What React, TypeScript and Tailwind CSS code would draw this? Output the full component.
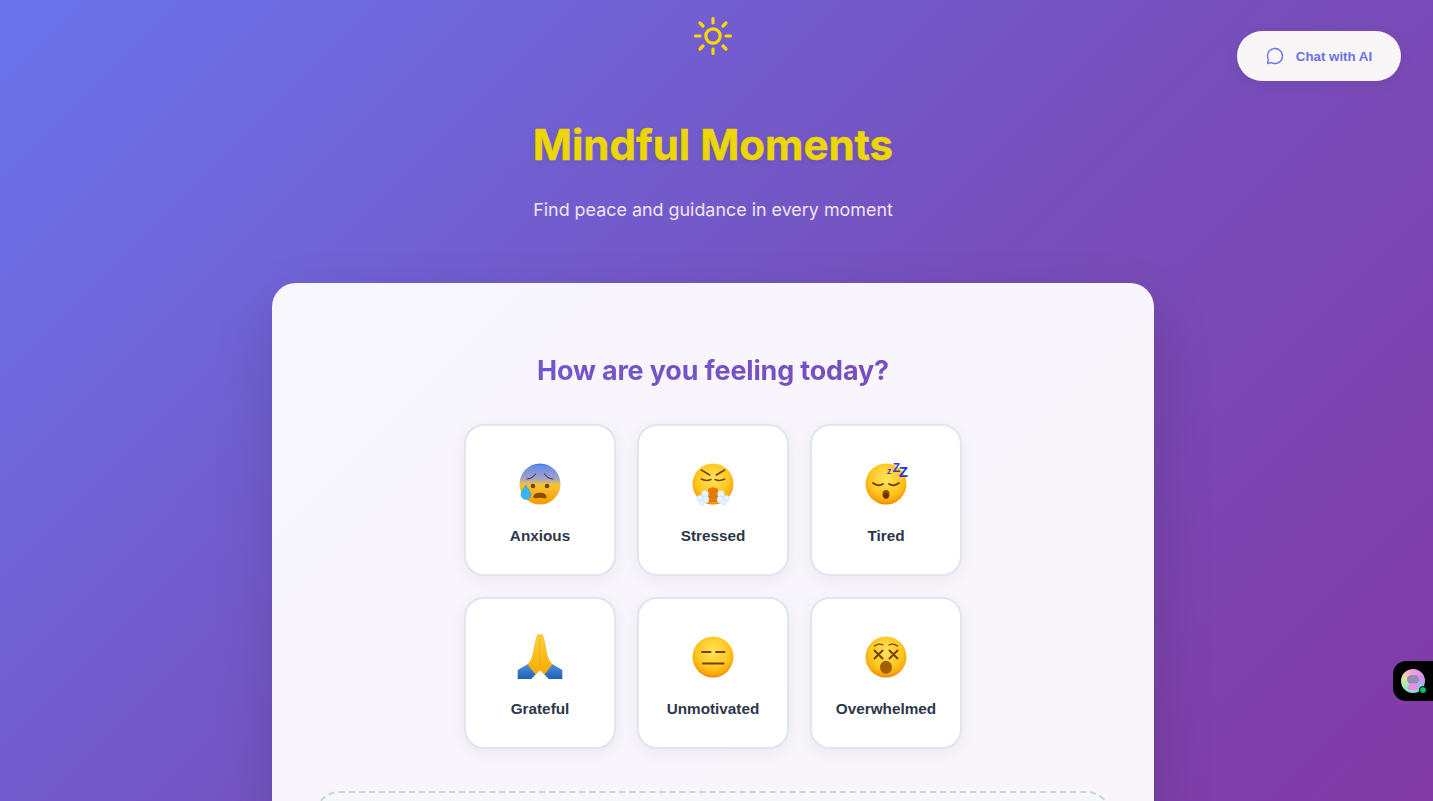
import React from "react";
import { MessageCircle } from "lucide-react";

function Face({ id, children, top }: { id: string; children?: React.ReactNode; top?: boolean }) {
  return (
    <svg width="48" height="48" viewBox="0 0 48 48" className="block overflow-visible">
      <defs>
        {top ? (
          <linearGradient id={id} x1="0" y1="0" x2="0" y2="1">
            <stop offset="0" stopColor="#2a7ff2" />
            <stop offset="0.07" stopColor="#6a8ce8" />
            <stop offset="0.38" stopColor="#a5a3c4" />
            <stop offset="0.52" stopColor="#f7c531" />
            <stop offset="1" stopColor="#f79a00" />
          </linearGradient>
        ) : (
          <radialGradient id={id} cx="0.5" cy="0.38" r="0.62">
            <stop offset="0" stopColor="#ffe45c" />
            <stop offset="0.62" stopColor="#ffc822" />
            <stop offset="0.9" stopColor="#fba508" />
            <stop offset="1" stopColor="#ef7d00" />
          </radialGradient>
        )}
      </defs>
      <circle cx="24" cy="24" r="20.5" fill={`url(#${id})`} />
      {children}
    </svg>
  );
}

const B = "#7a3f00";
const Z = "Liberation Sans, sans-serif";

const emojis: Record<string, React.ReactNode> = {
  Anxious: (
    <Face id="f1" top>
      <path d="M11 19q5.500-.5 8.500-5M37 19q-5.500-.5-8.500-5" stroke="#3e3a60" strokeWidth="1.100" fill="none" strokeLinecap="round" />
      <circle cx="17" cy="26" r="2.300" fill={B} />
      <circle cx="31" cy="26" r="2.300" fill={B} />
      <path d="M17.500 37c0-3 3-4.200 6.500-4.200s6.500 1.200 6.500 4.200c0 1.200-1 1.500-2 1.200-3-.7-6-.7-9 0-1 .3-2 0-2-1.200z" fill="#8a4a08" />
      <path d="M9.700 25c-2 3.800-4.700 6.500-4.700 9.500a4.900 4.900 0 0 0 9.800 0c0-3-3-5.700-5.100-9.500z" fill="#38b6f5" stroke="#1b8ee0" strokeWidth=".5" />
    </Face>
  ),
  Stressed: (
    <Face id="f2">
      <path d="M12.300 10l8.400 5M35.700 10l-8.400 5" stroke={B} strokeWidth="1.500" strokeLinecap="round" />
      <path d="M12.300 19q4.500 2.500 9.700.5M35.700 19q-4.500 2.500-9.700.5" stroke={B} strokeWidth="1.500" fill="none" strokeLinecap="round" />
      <path d="M19 42V29q5-3.500 10 0v13z" fill="#e47a00" />
      <g fill="#e8f3fb" stroke="#c5dbea" strokeWidth=".5">
        <circle cx="16" cy="34" r="3.500" />
        <circle cx="11" cy="38.500" r="3.300" />
        <circle cx="16.500" cy="39.500" r="3.500" />
        <circle cx="13" cy="42.500" r="2.400" />
        <circle cx="32" cy="34" r="3.500" />
        <circle cx="37" cy="38.500" r="3.300" />
        <circle cx="31.500" cy="39.500" r="3.500" />
        <circle cx="35" cy="42.500" r="2.400" />
      </g>
    </Face>
  ),
  Tired: (
    <Face id="f3">
      <path d="M11 23q5 4 10 1M37 23q-5 4-10 1" stroke="#6b3a00" strokeWidth="1.700" fill="none" strokeLinecap="round" />
      <ellipse cx="24" cy="34.500" rx="3.600" ry="4.600" fill="#8a4a08" />
      <ellipse cx="24" cy="35.500" rx="2.200" ry="2.600" fill="#6a3000" />
      <text x="25" y="14" fill="#2732c8" fontFamily={Z} fontWeight="700" fontSize="7">Z</text>
      <text x="30.700" y="11.700" fill="#2f3ce0" fontFamily={Z} fontWeight="700" fontSize="12">Z</text>
      <text x="36.700" y="17.300" fill="#2732e0" fontFamily={Z} fontWeight="700" fontSize="15">Z</text>
    </Face>
  ),
  Grateful: (
    <svg width="48" height="48" viewBox="0 0 48 48" className="block">
      <defs>
        <linearGradient id="p1" x1="0" y1="0" x2="0" y2="1">
          <stop offset="0" stopColor="#ffd23a" />
          <stop offset="1" stopColor="#f8ab00" />
        </linearGradient>
        <linearGradient id="p2" x1="0" y1="0" x2="0" y2="1">
          <stop offset="0" stopColor="#4f8fe0" />
          <stop offset="1" stopColor="#1c62b4" />
        </linearGradient>
      </defs>
      <path d="M1.700 37L12 31l8 10-4.700 5H1.700zM46.300 37L36 31l-8 10 4.700 5h13.600z" fill="url(#p2)" />
      <path d="M21.600 1.500c1.400-.6 2.200.3 2.300 2V37l-4.200 4.300-4.700-5.300-3.200-4.700c2.500-2.500 4.500-6.500 5.300-10.300 1.200-6 2.500-14.500 4.500-19.500z" fill="url(#p1)" stroke="#ea9500" strokeWidth=".4" />
      <path d="M26.400 1.500c-1.400-.6-2.200.3-2.300 2V37l4.200 4.300 4.700-5.300 3.200-4.700c-2.500-2.500-4.500-6.500-5.300-10.300-1.200-6-2.500-14.500-4.500-19.500z" fill="url(#p1)" stroke="#ea9500" strokeWidth=".4" />
    </svg>
  ),
  Unmotivated: (
    <Face id="f5">
      <path d="M13 19h8.500M27 19h8.500" stroke={B} strokeWidth="2" strokeLinecap="round" />
      <path d="M14 30.500h20.500" stroke={B} strokeWidth="2" strokeLinecap="round" />
    </Face>
  ),
  Overwhelmed: (
    <Face id="f6">
      <path d="M12.500 13q4-3.300 8.500-1M35.500 13q-4-3.300-8.500-1" stroke={B} strokeWidth="1.300" fill="none" strokeLinecap="round" />
      <path d="M12.500 17.500l8 8M20.500 17.500l-8 8M27.500 17.500l8 8M35.500 17.500l-8 8" stroke={B} strokeWidth="2" strokeLinecap="round" />
      <ellipse cx="24" cy="34.300" rx="6" ry="6.500" fill="#a45f04" />
    </Face>
  ),
};

const moods = ["Anxious", "Stressed", "Tired", "Grateful", "Unmotivated", "Overwhelmed"];

export default function App() {
  return (
    <div className="relative h-screen overflow-hidden bg-[linear-gradient(135deg,#6b74ec_0%,#764fbc_55%,#823aa6_100%)] pr-[7px] font-['Inter',sans-serif]">
      <header className="flex flex-col items-center pt-[16px]">
        <svg width="40" height="40" viewBox="0 0 40 40" fill="none" stroke="#ffd700" strokeWidth="3.200" strokeLinecap="round">
          <circle cx="20" cy="20" r="7.200" />
          <path d="M20 2.500V7M20 33v4.500M2.500 20H7M33 20h4.500M7 7l3 3M30 30l3 3M7 33l3-3M30 10l3-3" />
        </svg>
        <h1 className="mt-[64px] text-[42px] leading-[50px] font-bold text-[#ecd604] [-webkit-text-stroke:0.5px_#ecd604] [text-shadow:0_2px_6px_rgba(0,0,0,0.08)]">
          Mindful Moments
        </h1>
        <p className="mt-[24.500px] text-[17.900px] leading-[29px] text-[#ece6fa]">Find peace and guidance in every moment</p>
      </header>

      <main className="mx-auto mt-[59.500px] w-[882px] rounded-[24px] bg-white/95 px-[43px] pt-[68px] shadow-[0_25px_60px_rgba(0,0,0,0.15)]">
        <h2 className="text-center text-[26.900px] leading-[38px] font-bold tracking-[-0.13px] bg-[linear-gradient(90deg,#6f5ad6,#7a4ab4)] bg-clip-text text-transparent">
          How are you feeling today?
        </h2>
        <div className="mx-auto mt-[34.500px] grid w-[498px] grid-cols-3 gap-x-[21px] gap-y-[21px]">
          {moods.map((m) => (
            <div
              key={m}
              className="flex h-[152px] flex-col items-center rounded-[20px] border-2 border-[#dfe6f0] bg-white pt-[34px] shadow-[0_4px_15px_rgba(0,0,0,0.06)]"
            >
              {emojis[m]}
              <span className="mt-[18px] font-['Liberation_Sans',sans-serif] text-[15.300px] leading-[20px] font-bold text-[#2d3748]">
                {m}
              </span>
            </div>
          ))}
        </div>
        <div className="mt-[42.500px] h-[160px] rounded-[24px] border-2 border-dashed border-[#cbd5e0] bg-[#f5f7fb]" />
      </main>

      <button className="absolute top-[31px] right-[32px] flex h-[50px] w-[164px] items-center justify-center gap-[12px] rounded-full bg-[#f8f6f6] font-['Liberation_Sans',sans-serif] text-[13.300px] font-bold text-[#6a6fe8] shadow-[0_4px_15px_rgba(0,0,0,0.06)]">
        <MessageCircle size={18} strokeWidth={1.800} />
        <span className="pt-[1px]">Chat with AI</span>
      </button>

      <div className="absolute top-[661px] right-0 flex h-[40px] w-[40px] items-center rounded-l-[13px] bg-black pl-[8px]">
        <div className="relative h-[24px] w-[24px] rounded-full bg-[conic-gradient(#f0a0e0,#d090f0,#80d0f0,#90e8c0,#e8e0a0,#f0a0e0)]">
          <div className="absolute top-[6px] left-[6px] h-[9px] w-[12px] rounded-full bg-[#9a8ab8]" />
          <div className="absolute top-[14px] left-[7px] h-[7px] w-[10px] rounded-t-full bg-[#e890e0]" />
          <div className="absolute right-[-2px] bottom-[-1px] h-[8px] w-[8px] rounded-full border border-black bg-[#10c060]" />
        </div>
      </div>
    </div>
  );
}
